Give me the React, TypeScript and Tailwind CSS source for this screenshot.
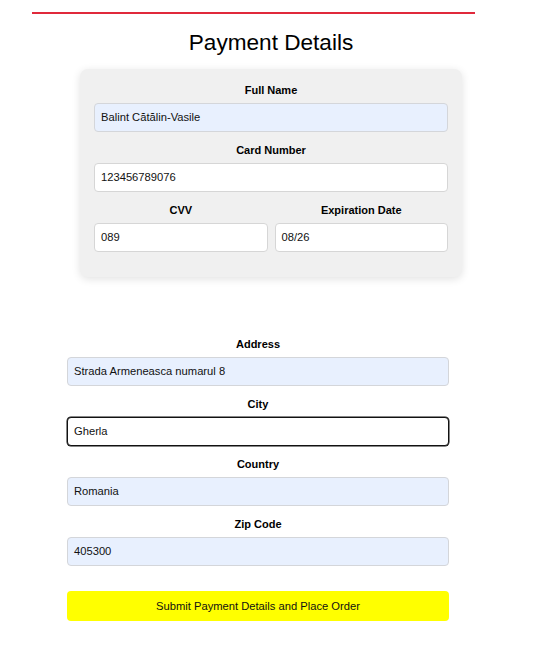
import React from "react";

const font = { fontFamily: '"Liberation Sans", Arial, sans-serif' };

function Field({
  label,
  value,
  variant,
}: {
  label: string;
  value: string;
  variant: "auto" | "white" | "focus";
}) {
  const cls =
    variant === "auto"
      ? "bg-[#e8f0fe] border border-[#d4d6da]"
      : variant === "white"
      ? "bg-white border border-[#d6d6d6]"
      : "bg-white border-[1.5px] border-[#111] shadow-[0_0_0_0.5px_#111]";
  return (
    <div className="flex flex-col">
      <div className="h-[13px] leading-[13px] text-[11px] font-bold text-center text-black mb-[6px]">
        {label}
      </div>
      <div
        className={`h-[29px] rounded-[4px] flex items-center pl-[6px] text-[11.2px] text-[#111] ${cls}`}
      >
        {value}
      </div>
    </div>
  );
}

export default function App() {
  return (
    <div className="w-[552px] h-[648px] bg-white relative overflow-hidden" style={font}>
      <div className="pt-[12px]">
        <div className="ml-[32px] w-[443px] h-[2px] bg-[#e0293b]" />
      </div>
      <div className="ml-[80px] w-[382px] mt-[15px] h-[28px] leading-[28px] text-center text-[22.6px] text-black">
        Payment Details
      </div>
      <div className="ml-[80px] w-[382px] mt-[12px] bg-[#f0f0f0] rounded-[8px] shadow-[0_2px_8px_rgba(0,0,0,0.12)] px-[14px] pt-[15px] pb-[25px] flex flex-col gap-[12px]">
        <Field label="Full Name" value="Balint Cătălin-Vasile" variant="auto" />
        <Field label="Card Number" value="123456789076" variant="white" />
        <div className="grid grid-cols-2 gap-[7px]">
          <Field label="CVV" value="089" variant="white" />
          <Field label="Expiration Date" value="08/26" variant="white" />
        </div>
      </div>
      <div className="ml-[67px] w-[382px] mt-[61px] flex flex-col gap-[12px]">
        <Field label="Address" value="Strada Armeneasca numarul 8" variant="auto" />
        <Field label="City" value="Gherla" variant="focus" />
        <Field label="Country" value="Romania" variant="auto" />
        <Field label="Zip Code" value="405300" variant="auto" />
        <button className="mt-[13px] h-[30px] rounded-[4px] bg-[#ffff00] text-[11.2px] text-[#111] flex items-center justify-center">
          Submit Payment Details and Place Order
        </button>
      </div>
    </div>
  );
}
